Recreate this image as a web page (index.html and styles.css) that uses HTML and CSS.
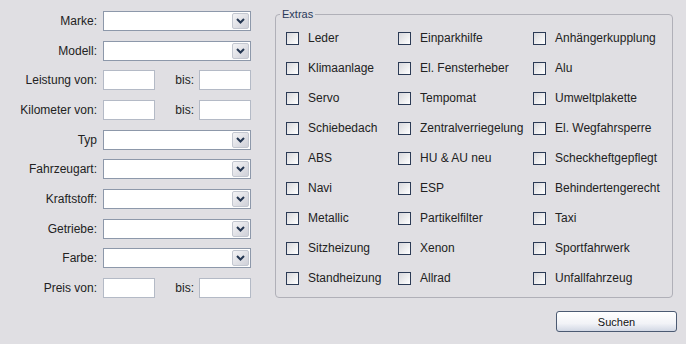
FILE: index.html
```html
<!DOCTYPE html>
<html lang="de">
<head>
    <meta charset="UTF-8">
    <title>Fahrzeugsuche</title>
    <link rel="stylesheet" href="styles.css">
</head>
<body>

    <div class="window">
        <div class="main">
            <div class="search-form">
                <label>Marke:</label>
                <div class="combo"><span class="combo-value"></span><span class="combo-btn"><svg width="9" height="6" viewBox="0 0 9 6"><path d="M1 1 L4.5 4.5 L8 1" fill="none" stroke="#253752" stroke-width="2"/></svg></span></div>

                <label>Modell:</label>
                <div class="combo"><span class="combo-value"></span><span class="combo-btn"><svg width="9" height="6" viewBox="0 0 9 6"><path d="M1 1 L4.5 4.5 L8 1" fill="none" stroke="#253752" stroke-width="2"/></svg></span></div>

                <label>Leistung von:</label>
                <div class="range"><input type="text" class="field"><label>bis:</label><input type="text" class="field"></div>

                <label>Kilometer von:</label>
                <div class="range"><input type="text" class="field"><label>bis:</label><input type="text" class="field"></div>

                <label>Typ</label>
                <div class="combo"><span class="combo-value"></span><span class="combo-btn"><svg width="9" height="6" viewBox="0 0 9 6"><path d="M1 1 L4.5 4.5 L8 1" fill="none" stroke="#253752" stroke-width="2"/></svg></span></div>

                <label>Fahrzeugart:</label>
                <div class="combo"><span class="combo-value"></span><span class="combo-btn"><svg width="9" height="6" viewBox="0 0 9 6"><path d="M1 1 L4.5 4.5 L8 1" fill="none" stroke="#253752" stroke-width="2"/></svg></span></div>

                <label>Kraftstoff:</label>
                <div class="combo"><span class="combo-value"></span><span class="combo-btn"><svg width="9" height="6" viewBox="0 0 9 6"><path d="M1 1 L4.5 4.5 L8 1" fill="none" stroke="#253752" stroke-width="2"/></svg></span></div>

                <label>Getriebe:</label>
                <div class="combo"><span class="combo-value"></span><span class="combo-btn"><svg width="9" height="6" viewBox="0 0 9 6"><path d="M1 1 L4.5 4.5 L8 1" fill="none" stroke="#253752" stroke-width="2"/></svg></span></div>

                <label>Farbe:</label>
                <div class="combo"><span class="combo-value"></span><span class="combo-btn"><svg width="9" height="6" viewBox="0 0 9 6"><path d="M1 1 L4.5 4.5 L8 1" fill="none" stroke="#253752" stroke-width="2"/></svg></span></div>

                <label>Preis von:</label>
                <div class="range"><input type="text" class="field"><label>bis:</label><input type="text" class="field"></div>
            </div>

            <fieldset class="extras">
                <legend>Extras</legend>
                <div class="extras-grid">
                    <label class="check"><span class="box"></span>Leder</label>
                    <label class="check"><span class="box"></span>Einparkhilfe</label>
                    <label class="check"><span class="box"></span>Anhängerkupplung</label>

                    <label class="check"><span class="box"></span>Klimaanlage</label>
                    <label class="check"><span class="box"></span>El. Fensterheber</label>
                    <label class="check"><span class="box"></span>Alu</label>

                    <label class="check"><span class="box"></span>Servo</label>
                    <label class="check"><span class="box"></span>Tempomat</label>
                    <label class="check"><span class="box"></span>Umweltplakette</label>

                    <label class="check"><span class="box"></span>Schiebedach</label>
                    <label class="check"><span class="box"></span>Zentralverriegelung</label>
                    <label class="check"><span class="box"></span>El. Wegfahrsperre</label>

                    <label class="check"><span class="box"></span>ABS</label>
                    <label class="check"><span class="box"></span>HU &amp; AU neu</label>
                    <label class="check"><span class="box"></span>Scheckheftgepflegt</label>

                    <label class="check"><span class="box"></span>Navi</label>
                    <label class="check"><span class="box"></span>ESP</label>
                    <label class="check"><span class="box"></span>Behindertengerecht</label>

                    <label class="check"><span class="box"></span>Metallic</label>
                    <label class="check"><span class="box"></span>Partikelfilter</label>
                    <label class="check"><span class="box"></span>Taxi</label>

                    <label class="check"><span class="box"></span>Sitzheizung</label>
                    <label class="check"><span class="box"></span>Xenon</label>
                    <label class="check"><span class="box"></span>Sportfahrwerk</label>

                    <label class="check"><span class="box"></span>Standheizung</label>
                    <label class="check"><span class="box"></span>Allrad</label>
                    <label class="check"><span class="box"></span>Unfallfahrzeug</label>
                </div>
            </fieldset>
        </div>

        <div class="actions">
            <button class="search-btn">Suchen</button>
        </div>
    </div>

</body>
</html>
```

FILE: styles.css
```css
body {
    margin: 0;
    background-color: #e0dfe3;
    font-family: "Liberation Sans", Arial, sans-serif;
    font-size: 12px;
    color: #222;
}
.window {
    width: 686px;
    height: 344px;
}
.main {
    display: flex;
    align-items: flex-start;
}
.search-form {
    display: grid;
    grid-template-columns: 97px 148px;
    grid-auto-rows: 20px;
    column-gap: 6px;
    row-gap: 9.67px;
    margin-top: 11px;
}
.search-form > label {
    text-align: right;
    line-height: 20px;
}
.combo {
    display: flex;
    height: 20px;
    box-sizing: border-box;
    border: 1px solid #8d98aa;
    background-color: #fff;
}
.combo-value {
    flex: 1;
}
.combo-btn {
    width: 15px;
    margin: 1px;
    display: flex;
    align-items: center;
    justify-content: center;
    border: 1px solid #c3c7d0;
    border-radius: 2px;
    background: linear-gradient(135deg, #f4f4f6, #cfd0d8);
}
.range {
    display: flex;
    align-items: center;
}
.range label {
    flex: 1;
    text-align: right;
    padding-right: 5px;
}
.field {
    width: 52px;
    height: 20px;
    box-sizing: border-box;
    margin: 0;
    padding: 0;
    border: 1px solid #b4bac6;
    background-color: #fff;
}
.extras {
    margin: 8px 0 0 24px;
    padding: 0 0 4px 10px;
    width: 398px;
    height: 290px;
    box-sizing: border-box;
    border: 1px solid #b0b0b8;
    border-radius: 4px;
}
.extras legend {
    padding: 0 2px;
    margin-left: -6px;
    font-size: 11px;
    color: #2a3a5a;
}
.extras-grid {
    display: grid;
    grid-template-columns: 112px 135px auto;
    grid-auto-rows: 30px;
    margin-top: 3px;
}
.check {
    display: flex;
    align-items: center;
    gap: 9px;
}
.box {
    width: 13px;
    height: 13px;
    box-sizing: border-box;
    border: 1px solid #2b3a55;
    background: linear-gradient(135deg, #d8d8dc, #ffffff);
}
.actions {
    display: flex;
    justify-content: flex-end;
    padding: 13px 9px 0 0;
}
.search-btn {
    width: 121px;
    height: 21px;
    margin: 0;
    padding: 0;
    font-family: "Liberation Sans", Arial, sans-serif;
    font-size: 11px;
    color: #111;
    border: 1px solid #4b5a72;
    border-radius: 3px;
    background: linear-gradient(#ffffff, #f2f3f7 60%, #d2d8e4);
}
```
